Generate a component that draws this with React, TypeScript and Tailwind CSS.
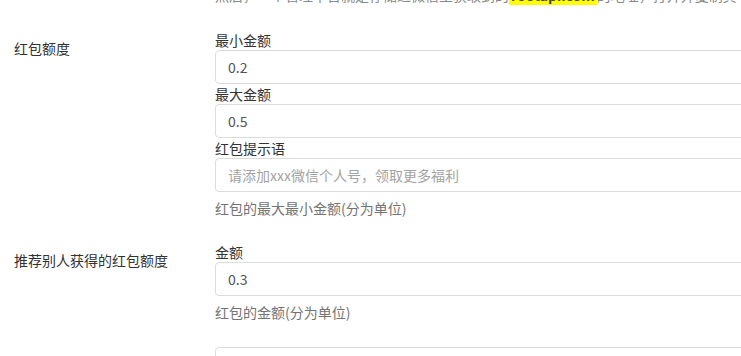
import React from 'react';

const font = "font-['Noto_Sans_CJK_SC','Noto_Sans',sans-serif]";

interface FieldProps {
  label?: string;
  value?: string;
  placeholder?: string;
}

/** Single labelled input inside a form group. */
function Field({ label, value, placeholder }: FieldProps) {
  return (
    <div>
      {label && <div className="text-[14px] leading-[20px] text-[#333]">{label}</div>}
      <div
        className={`h-[34px] w-[700px] rounded-[4px] border border-[#dcdcdc] bg-white px-[12px] text-[14px] leading-[32px] ${
          value ? 'text-[#555]' : 'text-[#a3a3a3]'
        }`}
      >
        {value ?? placeholder}
      </div>
    </div>
  );
}

function Help({ children }: { children: React.ReactNode }) {
  return <p className="mt-[6px] text-[14px] leading-[20px] text-[#737373]">{children}</p>;
}

/** Horizontal form row: label on the left, controls on the right. */
function Group({ label, children }: { label?: string; children: React.ReactNode }) {
  return (
    <div className="flex">
      <div className="w-[215px] shrink-0 pl-[14px] pt-[8px] text-[14px] leading-[20px] text-[#333]">{label}</div>
      <div className="w-[700px] shrink-0">{children}</div>
    </div>
  );
}

export default function App() {
  return (
    <div className={`h-[356px] w-[741px] overflow-hidden bg-white ${font}`}>
      <div className="w-[1000px]">
        {/* Cut-off description line at the top */}
        <p className="-mt-[15px] whitespace-nowrap pl-[215px] text-[14px] leading-[20px] text-[#888]">
          然后，一个管理平台就是存储进微信里获取到的
          <span className="bg-[#ffff00] px-[2px] font-bold text-[#444]">rootapi.com</span>
          的地址，打开并复制其中的文本内容
        </p>

        <div className="mt-[25px]">
          <Group label="红包额度">
            <Field label="最小金额" value="0.2" />
            <Field label="最大金额" value="0.5" />
            <Field label="红包提示语" placeholder="请添加xxx微信个人号，领取更多福利" />
            <Help>红包的最大最小金额(分为单位)</Help>
          </Group>
        </div>

        <div className="mt-[24px]">
          <Group label="推荐别人获得的红包额度">
            <Field label="金额" value="0.3" />
            <Help>红包的金额(分为单位)</Help>
          </Group>
        </div>

        <div className="mt-[25px]">
          <Group>
            <Field placeholder="" />
          </Group>
        </div>
      </div>
    </div>
  );
}
